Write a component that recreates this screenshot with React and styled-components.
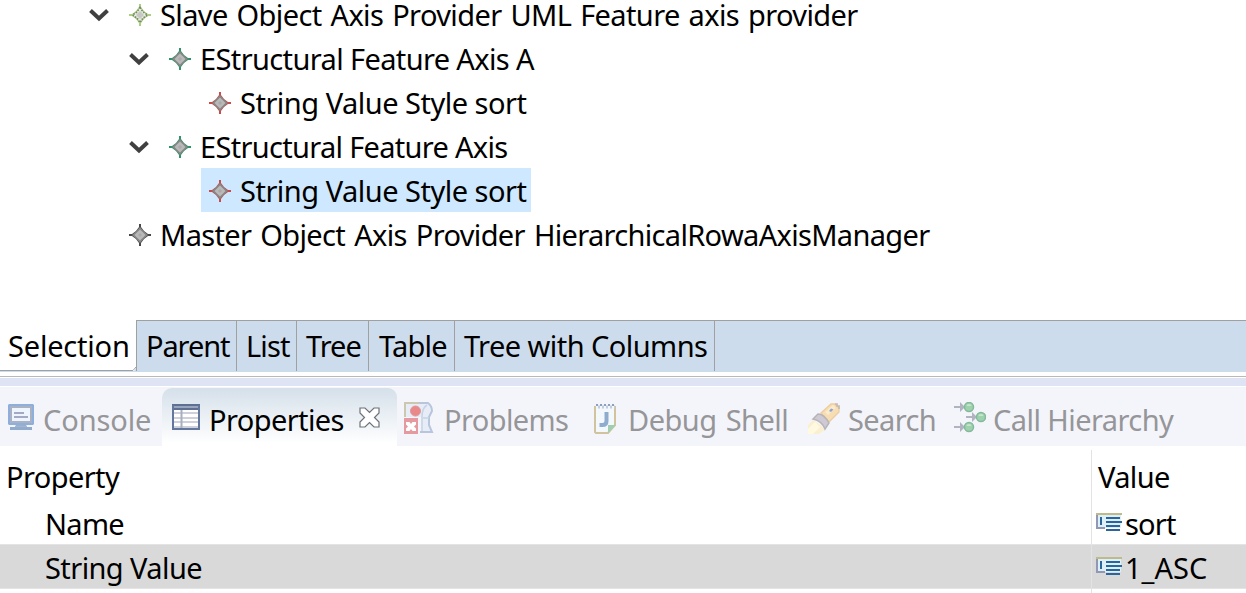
import React from "react";
import styled, { createGlobalStyle } from "styled-components";

const GlobalStyle = createGlobalStyle`
  * { box-sizing: border-box; }
  body {
    margin: 0;
    overflow: hidden;
    background: #fff;
    color: #000;
    font: 29px/44px "Noto Sans", "Open Sans", sans-serif;
  }
  svg { display: block; flex: none; }
`;

const Window = styled.div`
  display: flex;
  flex-direction: column;
  width: 1246px;
  height: 593px;
  overflow: hidden;
`;

const Label = styled.span`
  white-space: nowrap;
  letter-spacing: ${(p) => p.$track || 0}px;
  word-spacing: ${(p) => p.$word || 0}px;
`;

/* ---------- model tree ---------- */

const Tree = styled.div`
  display: flex;
  flex-direction: column;
  align-items: flex-start;
  flex: none;
  height: 328px;
  margin-top: -8px;
`;

const TreeRow = styled.div`
  display: flex;
  align-items: center;
  height: 44px;
  flex: none;
  padding-left: ${(p) => p.$indent}px;
`;

const Chevron = styled.svg`
  width: 20px;
  height: 14px;
  margin: 1px 12px 0 0;
`;

const TreeItem = styled.div`
  display: flex;
  align-items: center;
  height: 44px;
  width: ${(p) => (p.$width ? `${p.$width}px` : "auto")};
  padding-left: 8px;
  gap: 9px;
  background: ${(p) => (p.$selected ? "#cde8ff" : "transparent")};

  ${Label} { padding-top: 1px; }
`;

const Star = styled.svg`
  width: 22px;
  height: 22px;
  margin-top: 2px;
`;

/* ---------- editor page tabs ---------- */

const PageTabs = styled.div`
  display: flex;
  flex: none;
  height: 52px;
  background: linear-gradient(#a0a0a0 0 1px, #cddcec 1px);
  line-height: 51px;
`;

const ActivePage = styled.div`
  width: 136px;
  height: 52px;
  flex: none;
  display: grid;
  background: #fff;

  > * { grid-area: 1 / 1; }
  ${Label} { padding-left: 8px; }
`;

const PageTab = styled.div`
  width: ${(p) => p.$width}px;
  height: 51px;
  flex: none;
  padding-left: ${(p) => p.$pad}px;
  border-right: 1px solid #a0a0a0;
  border-left: ${(p) => (p.$first ? "1px solid #a0a0a0" : "0")};
`;

const Sash = styled.div`
  flex: none;
  height: 15px;
  background: linear-gradient(
    #fff 0 4px, #b9b9b9 4px 5px, #fff 5px 6px, #dfe4f4 6px 14px, #fff 14px 15px
  );
`;

/* ---------- view tabs ---------- */

const ViewTabs = styled.div`
  display: flex;
  flex: none;
  height: 59px;
  background: #f4f5fb;
  line-height: 64px;
`;

const ViewTab = styled.div`
  display: flex;
  flex: none;
  width: ${(p) => p.$width}px;
  height: 58px;
  margin-top: 1px;
  padding-left: ${(p) => p.$pad}px;
  color: ${(p) => (p.$active ? "#000" : "#969699")};
  border-radius: 10px 9px 0 0;
  background: ${(p) => (p.$active ? "linear-gradient(#d5e0ea, #fff 96%)" : "none")};
`;

const ViewIcon = styled.svg`
  width: ${(p) => p.$w}px;
  height: ${(p) => p.$h}px;
  margin-top: ${(p) => p.$top}px;
  margin-right: ${(p) => p.$gap}px;
`;

const CloseIcon = styled.svg`
  width: 21px;
  height: 21px;
  margin: 19px 17px 0 auto;
`;

/* ---------- property table ---------- */

const Table = styled.div`
  flex: none;
  padding-top: 4px;
`;

const TableRow = styled.div`
  display: grid;
  grid-template-columns: 1092px 1fr;
  height: ${(p) => p.$height}px;
  line-height: ${(p) => p.$line}px;
  background: ${(p) => (p.$selected ? "#d9d9d9" : "#fff")};
  box-shadow: ${(p) => (p.$selected ? "inset 0 1px #e4e4e4, inset 0 -1px #e4e4e4" : "none")};
`;

const Cell = styled.div`
  display: flex;
  padding-left: ${(p) => p.$pad || 0}px;
  border-right: ${(p) => (p.$divider ? "1px solid #e3e3e3" : "0")};
`;

const ValueIcon = styled.svg`
  width: 26px;
  height: 18px;
  margin: ${(p) => p.$top}px 3px 0 4px;
`;

function ModelIcon({ color, light }) {
  return (
    <Star viewBox="0 0 22 22">
      <path d="M10 0h2v3l3 4 4 3h3v2h-3l-4 3-3 4v3h-2v-3l-3-4-4-3H0v-2h3l4-3 3-4z" fill={color} />
      {light ? (
        <>
          <path d="M11 3.500L14 8l4.500 3-4.500 3-3 4.500L8 14l-4.500-3L8 8z" fill="#e6efdd" stroke="#7c8275" strokeWidth="1.600" strokeDasharray="1.500 1.300" />
          <path d="M11 7l4 4-4 4-4-4z" fill="#c6c9c2" />
        </>
      ) : (
        <>
          <path d="M11 3l3.800 4.200L19 11l-4.200 3.800L11 19l-3.800-4.200L3 11l4.200-3.800z" fill="#868686" />
          <path d="M11 5.500l2.800 2.700L16.500 11l-2.700 2.800L11 16.500l-2.800-2.700L5.500 11l2.700-2.800z" fill="#b9b9b9" />
          <path d="M11 9l2 2-2 2-2-2z" fill="#aaa" />
        </>
      )}
    </Star>
  );
}

function Expander() {
  return (
    <Chevron viewBox="0 0 20 14">
      <path d="M1.5 2.5L10 10.5L18.5 2.5" fill="none" stroke="#404040" strokeWidth="4" />
    </Chevron>
  );
}

function ConsoleIcon() {
  return (
    <ViewIcon $w={26} $h={26} $top={16} $gap={9} viewBox="0 0 26 26">
      <path d="M1 0h24l1 1v19l-1 1H1l-1-1V1z" fill="#8eaedb" />
      <path d="M2 2h22v17H2z" fill="#a9b1c3" />
      <path d="M4 4h18v13H4z" fill="#eef5fd" />
      <path d="M6 9h10M6 13h14" stroke="#a3aac4" strokeWidth="2" />
      <path d="M8 21h10v2h6v3H2v-3h6z" fill="#8faccf" />
      <path d="M7 22.3h12" stroke="#a9b4c9" strokeWidth="1.5" />
    </ViewIcon>
  );
}

function PropertiesIcon() {
  return (
    <ViewIcon $w={28} $h={26} $top={16} $gap={9} viewBox="0 0 28 26">
      <path d="M0 0h28v26H0z" fill="#5e6f91" />
      <path d="M2 2h24v2H2z" fill="#98a5bf" />
      <path d="M2 6h24v18H2z" fill="#fff" />
      <path d="M2 9h24M2 14h24M2 18h24M2 23h24" stroke="#ced1dc" strokeWidth="2" />
      <path d="M9.500 6v18" stroke="#a8afbf" strokeWidth="2" />
      <path d="M1 1v24h26V1" fill="none" stroke="#63769b" strokeWidth="2" />
    </ViewIcon>
  );
}

function ProblemsIcon() {
  return (
    <ViewIcon $w={30} $h={32} $top={14} $gap={10} viewBox="0 0 30 32">
      <path d="M1 1h23q4 3 4 8l-3 6v8l3 7H17V15H1z" fill="#e6edf7" />
      <path d="M1 15V1h16" fill="none" stroke="#cbc8ad" strokeWidth="2" />
      <path d="M15 1h9q4 3 4 8l-3 6v8l3 7H16" fill="none" stroke="#b9c5dc" strokeWidth="2" />
      <path d="M18 15q0-9 5-12M17 16h8M18 17v12" fill="none" stroke="#c7d3e5" strokeWidth="1.5" />
      <circle cx="11.5" cy="9" r="5" fill="#ea8989" stroke="#e0979c" strokeWidth="1" />
      <path d="M0 16h14v16H0z" fill="#e59aa0" />
      <path d="M2 20h3.500L7 22l1.500-2H12v2.500L10 24.500l2 2V29H8.500L7 27l-1.500 2H2v-2.500l2-2-2-2z" fill="#fff" />
    </ViewIcon>
  );
}

function DebugShellIcon() {
  return (
    <ViewIcon $w={22} $h={31} $top={15} $gap={12} viewBox="0 0 22 31">
      <path d="M1 3v26l1 1h12l7-8V3z" fill="#f3f8fc" />
      <path d="M1 3v26l1 1h12l7-8V3" fill="none" stroke="#d1c39d" strokeWidth="2" />
      <path d="M2 2h20" stroke="#8ba0bb" strokeWidth="2" strokeDasharray="2 2" />
      <path d="M4 4h17" stroke="#c0cce0" strokeWidth="3" strokeDasharray="2 2" />
      <path d="M12.500 9v9q0 4-4 4h-3" fill="none" stroke="#8faccf" strokeWidth="4" />
      <path d="M14 22h8l-8 8z" fill="#9fcfb0" />
    </ViewIcon>
  );
}

function SearchIcon() {
  return (
    <ViewIcon $w={32} $h={31} $top={15} $gap={8} viewBox="0 0 32 31">
      <path d="M0 22L5 17L18 26L11 31H0z" fill="#fbefd2" />
      <path d="M0 26l7-7 5 5-7 7H0z" fill="#fff9df" />
      <path d="M13 10L23 1h4l4 4v4L21 19z" fill="#f6ddb3" stroke="#edcd9f" strokeWidth="1.3" />
      <path d="M17 9l8-7 3 3-8 7z" fill="#fbebcb" />
      <path d="M27 1h2v2h2v3" fill="none" stroke="#c4b9b2" strokeWidth="1.7" />
      <path d="M21 8l2-2.500 2.500 1L23 9z" fill="#8ba6cc" />
      <path d="M5 16l5-5q6 0 11 9l-4 6q-3-8-12-10z" fill="#cdcad3" stroke="#b8b3b9" strokeWidth="1.5" />
    </ViewIcon>
  );
}

function CallHierarchyIcon() {
  return (
    <ViewIcon $w={32} $h={32} $top={14} $gap={7} viewBox="0 0 32 32">
      {[[0, 5], [12, 15], [0, 25]].map(([x, y]) => (
        <g key={y} transform={`translate(${x} ${y})`}>
          <path d="M0-1h6v-4l5 5-5 5V1H0z" fill="#b0b4c0" />
          <circle cx="15" cy="0" r="4.500" fill="#9ed2ae" stroke="#84b99b" strokeWidth="1.500" />
          <path d="M12.500-1q0-2 2.500-2t2.500 2z" fill="#c4e5ca" />
        </g>
      ))}
    </ViewIcon>
  );
}

function TextValueIcon({ top }) {
  return (
    <ValueIcon $top={top} viewBox="0 0 26 18">
      <path d="M1 1h24v14H1z" fill="#dcf0f5" />
      <path d="M0 1h26" stroke="#c0b98a" strokeWidth="2" />
      <path d="M1 2v13h8" fill="none" stroke="#9297b6" strokeWidth="2" />
      <path d="M5 4v8M10 5h14M10 9h16M10 13h14M10 17h14" stroke="#2a659e" strokeWidth="2" />
    </ValueIcon>
  );
}

function CloseButton() {
  return (
    <CloseIcon viewBox="0 0 21 21">
      <path d="M1 1h5l4.500 4.500L15 1h5v5l-4.500 4.500L20 15v5h-5l-4.500-4.500L6 20H1v-5l4.500-4.500L1 6z" fill="#fff" stroke="#6d7278" strokeWidth="1.2" />
    </CloseIcon>
  );
}

const nodes = [
  { indent: 89, open: true, color: "#a9d07e", light: true, text: "Slave Object Axis Provider UML Feature axis provider", track: -0.62, word: 2 },
  { indent: 129, open: true, color: "#2f9568", text: "EStructural Feature Axis A", track: -0.62 },
  { indent: 201, color: "#c74d4d", text: "String Value Style sort", track: -0.5 },
  { indent: 129, open: true, color: "#2f9568", text: "EStructural Feature Axis", track: -0.69 },
  { indent: 201, color: "#c74d4d", text: "String Value Style sort", track: -0.5, selected: true, width: 330 },
  { indent: 121, color: "#484848", text: "Master Object Axis Provider HierarchicalRowaAxisManager", track: -0.67, word: 2.25 },
];

const pages = [
  { text: "Parent", width: 101, pad: 9, track: -1.1 },
  { text: "List", width: 60, pad: 9, track: -0.86 },
  { text: "Tree", width: 72, pad: 9, track: -1 },
  { text: "Table", width: 86, pad: 10, track: -0.8 },
  { text: "Tree with Columns", width: 260, pad: 9, track: -0.55 },
];

const views = [
  { text: "Console", Icon: ConsoleIcon, width: 162, pad: 8, track: -0.1 },
  { text: "Properties", Icon: PropertiesIcon, width: 235, pad: 10, track: -0.6, active: true },
  { text: "Problems", Icon: ProblemsIcon, width: 187, pad: 7, track: -0.6 },
  { text: "Debug Shell", Icon: DebugShellIcon, width: 214, pad: 10, track: -0.5, word: 2 },
  { text: "Search", Icon: SearchIcon, width: 146, pad: 10, track: -0.6 },
  { text: "Call Hierarchy", Icon: CallHierarchyIcon, width: 240, pad: 10, track: -0.56 },
];

export default function App() {
  return (
    <Window>
      <GlobalStyle />
      <Tree>
        {nodes.map((n, i) => (
          <TreeRow key={i} $indent={n.indent}>
            {n.open && <Expander />}
            <TreeItem $selected={n.selected} $width={n.width}>
              <ModelIcon color={n.color} light={n.light} />
              <Label $track={n.track} $word={n.word}>{n.text}</Label>
            </TreeItem>
          </TreeRow>
        ))}
      </Tree>

      <PageTabs>
        <ActivePage>
          <svg width="136" height="52" viewBox="0 0 136 52">
            <path d="M0 51H134L136 48V52H0z" fill="#cddcec" />
            <path d="M0 50.500H133L136 47" fill="none" stroke="#a0a0a0" />
          </svg>
          <Label $track={-0.2}>Selection</Label>
        </ActivePage>
        {pages.map((p, i) => (
          <PageTab key={p.text} $width={p.width} $pad={p.pad} $first={i === 0}>
            <Label $track={p.track}>{p.text}</Label>
          </PageTab>
        ))}
      </PageTabs>
      <Sash />

      <ViewTabs>
        {views.map(({ text, Icon, width, pad, track, word, active }) => (
          <ViewTab key={text} $width={width} $pad={pad} $active={active}>
            <Icon />
            <Label $track={track} $word={word}>{text}</Label>
            {active && <CloseButton />}
          </ViewTab>
        ))}
      </ViewTabs>

      <Table>
        <TableRow $height={52} $line={54}>
          <Cell $pad={6} $divider><Label $track={-0.59}>Property</Label></Cell>
          <Cell $pad={6}><Label $track={-0.62}>Value</Label></Cell>
        </TableRow>
        <TableRow $height={42} $line={44}>
          <Cell $pad={45} $divider><Label $track={-0.7}>Name</Label></Cell>
          <Cell><TextValueIcon top={11} /><Label $track={-0.8}>sort</Label></Cell>
        </TableRow>
        <TableRow $height={45} $line={48} $selected>
          <Cell $pad={45} $divider><Label $track={-0.58}>String Value</Label></Cell>
          <Cell><TextValueIcon top={13} /><Label $track={0.02}>1_ASC</Label></Cell>
        </TableRow>
        <TableRow $height={4} $line={4}><Cell $divider /></TableRow>
      </Table>
    </Window>
  );
}
